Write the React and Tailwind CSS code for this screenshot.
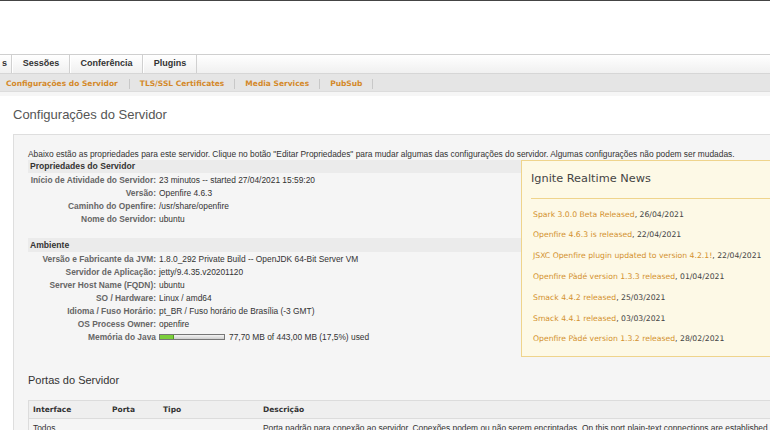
import React from 'react';

const sans = "font-['Liberation_Sans',Arial,sans-serif]";
const verd = "font-['DejaVu_Sans',Verdana,sans-serif]";

const tabs = ['Sessões', 'Conferência', 'Plugins'];
const subnav = ['Configurações do Servidor', 'TLS/SSL Certificates', 'Media Services', 'PubSub'];

const serverProps = [
    ['Início de Atividade do Servidor:', '23 minutos -- started 27/04/2021 15:59:20'],
    ['Versão:', 'Openfire 4.6.3'],
    ['Caminho do Openfire:', '/usr/share/openfire'],
    ['Nome do Servidor:', 'ubuntu'],
];

const envProps = [
    ['Versão e Fabricante da JVM:', '1.8.0_292 Private Build -- OpenJDK 64-Bit Server VM'],
    ['Servidor de Aplicação:', 'jetty/9.4.35.v20201120'],
    ['Server Host Name (FQDN):', 'ubuntu'],
    ['SO / Hardware:', 'Linux / amd64'],
    ['Idioma / Fuso Horário:', 'pt_BR / Fuso horário de Brasília (-3 GMT)'],
    ['OS Process Owner:', 'openfire'],
];

const news = [
    ['Spark 3.0.0 Beta Released', '26/04/2021'],
    ['Openfire 4.6.3 is released', '22/04/2021'],
    ['JSXC Openfire plugin updated to version 4.2.1!', '22/04/2021'],
    ['Openfire Pàdé version 1.3.3 released', '01/04/2021'],
    ['Smack 4.4.2 released', '25/03/2021'],
    ['Smack 4.4.1 released', '03/03/2021'],
    ['Openfire Pàdé version 1.3.2 released', '28/02/2021'],
];

const PropRow = ({ label, children }) => (
    <div className="flex items-center h-[13px] text-[8.4px] leading-[10px]">
        <span className="w-[128px] shrink-0 text-right font-bold text-[#666] whitespace-nowrap">{label}</span>
        <span className="ml-[3px] text-[#333] whitespace-nowrap flex items-center">{children}</span>
    </div>
);

const SectionBar = ({ title, h }) => (
    <div className={`bg-[#ebebeb] ${h} flex items-center pl-[2px] text-[8.6px] font-bold text-[#333]`}>{title}</div>
);

export default function App() {
    return (
        <div className={`w-[770px] h-[430px] overflow-hidden bg-white ${sans}`}>
            <div className="h-px bg-[#444]" />
            <div className="h-[53px]" />

            {/* Top tabs */}
            <div className="h-[19px] border-t border-[#cfcfcf] bg-gradient-to-b from-white to-[#f0f0f0] flex text-[9px] font-bold text-[#333]">
                <div className="w-[12px] border-r border-[#d0d0d0] flex items-center justify-end pr-[4px]">s</div>
                {tabs.map((t, i) => (
                    <div
                        key={t}
                        className={`flex items-center justify-center border-r border-[#d0d0d0] border-l border-l-white ${i === 0 ? 'w-[58px]' : i === 1 ? 'w-[73px]' : 'w-[54px]'}`}
                    >
                        {t}
                    </div>
                ))}
            </div>

            {/* Sub navigation */}
            <div className={`h-[19px] bg-[#e5e5e5] border-t border-[#d6d6d6] border-b border-b-[#dcdcdc] flex items-center pt-[2px] ${verd} text-[7.5px] font-bold text-[#d4892a]`}>
                {subnav.map((s, i) => (
                    <div key={s} className="flex items-center">
                        <span className={i === 0 ? 'pl-[6px] pr-[11px]' : 'px-[10px]'}>{s}</span>
                        <span className="w-px h-[10px] bg-[#c8c8c8]" />
                    </div>
                ))}
            </div>
            <div className="h-[4px] bg-[#f6f6f6]" />

            {/* Page title */}
            <div className="pl-[13px] pt-[11px] h-[38px] text-[13px] text-[#555] leading-[16px]">
                Configurações do Servidor
            </div>

            {/* Content box */}
            <div className="ml-[13px] border border-[#dedede] bg-[#f5f5f5] pl-[14px] pt-[14px] w-[800px]">
                <p className="text-[8.4px] leading-[10px] text-[#333] whitespace-nowrap">
                    Abaixo estão as propriedades para este servidor. Clique no botão "Editar Propriedades" para mudar algumas das configurações do servidor. Algumas configurações não podem ser mudadas.
                </p>

                <div className="flex mt-[1px]">
                    <div className="w-[493px] shrink-0">
                        <SectionBar title="Propriedades do Servidor" h="h-[13px]" />
                        {serverProps.map(([l, v]) => (
                            <PropRow key={l} label={l}>{v}</PropRow>
                        ))}
                        <div className="h-[13px]" />
                        <SectionBar title="Ambiente" h="h-[14px]" />
                        {envProps.map(([l, v]) => (
                            <PropRow key={l} label={l}>{v}</PropRow>
                        ))}
                        <PropRow label="Memória do Java">
                            <span className="w-[66px] h-[6px] border border-[#777] bg-gradient-to-b from-[#f4f4f4] to-[#cfcfcf] flex">
                                <span className="w-[14px] h-full bg-[#7ccf3c] border-r border-[#4f9a1f]" />
                            </span>
                            <span className="ml-[4px]">77,70 MB of 443,00 MB (17,5%) used</span>
                        </PropRow>
                    </div>

                    {/* News box */}
                    <div className={`w-[280px] shrink-0 h-[197px] border border-[#efd48c] bg-[#fdf9e6] ${verd}`}>
                        <div className="mx-[9px] pt-[11px] h-[38px] border-b border-[#efd48c] text-[11.3px] leading-[14px] text-[#444]">
                            Ignite Realtime News
                        </div>
                        <div className="pt-[5px] pl-[11px]">
                            {news.map(([t, d]) => (
                                <div key={t} className="h-[20.8px] flex items-center text-[7.7px] whitespace-nowrap">
                                    <span className="text-[#d3912e]">{t}</span>
                                    <span className="text-[#444]">, {d}</span>
                                </div>
                            ))}
                        </div>
                    </div>
                </div>

                {/* Server ports */}
                <div className="mt-[16px] text-[11px] leading-[14px] text-[#333]">Portas do Servidor</div>
                <div className="mt-[13px] border border-[#dcdcdc] bg-[#f5f5f5]">
                    <div className={`h-[18px] bg-[#efefef] border-b border-[#dcdcdc] flex items-center ${verd} text-[7.5px] font-bold text-[#333]`}>
                        <span className="pl-[4px] w-[83px]">Interface</span>
                        <span className="w-[51px]">Porta</span>
                        <span className="w-[100px]">Tipo</span>
                        <span>Descrição</span>
                    </div>
                    <div className="flex pt-[4px] h-[40px] text-[8.4px] leading-[10px] text-[#333]">
                        <span className="pl-[4px] w-[234px]">Todos</span>
                        <span className="whitespace-nowrap">Porta padrão para conexão ao servidor. Conexões podem ou não serem encriptadas. On this port plain-text connections are established</span>
                    </div>
                </div>
            </div>
        </div>
    );
}
